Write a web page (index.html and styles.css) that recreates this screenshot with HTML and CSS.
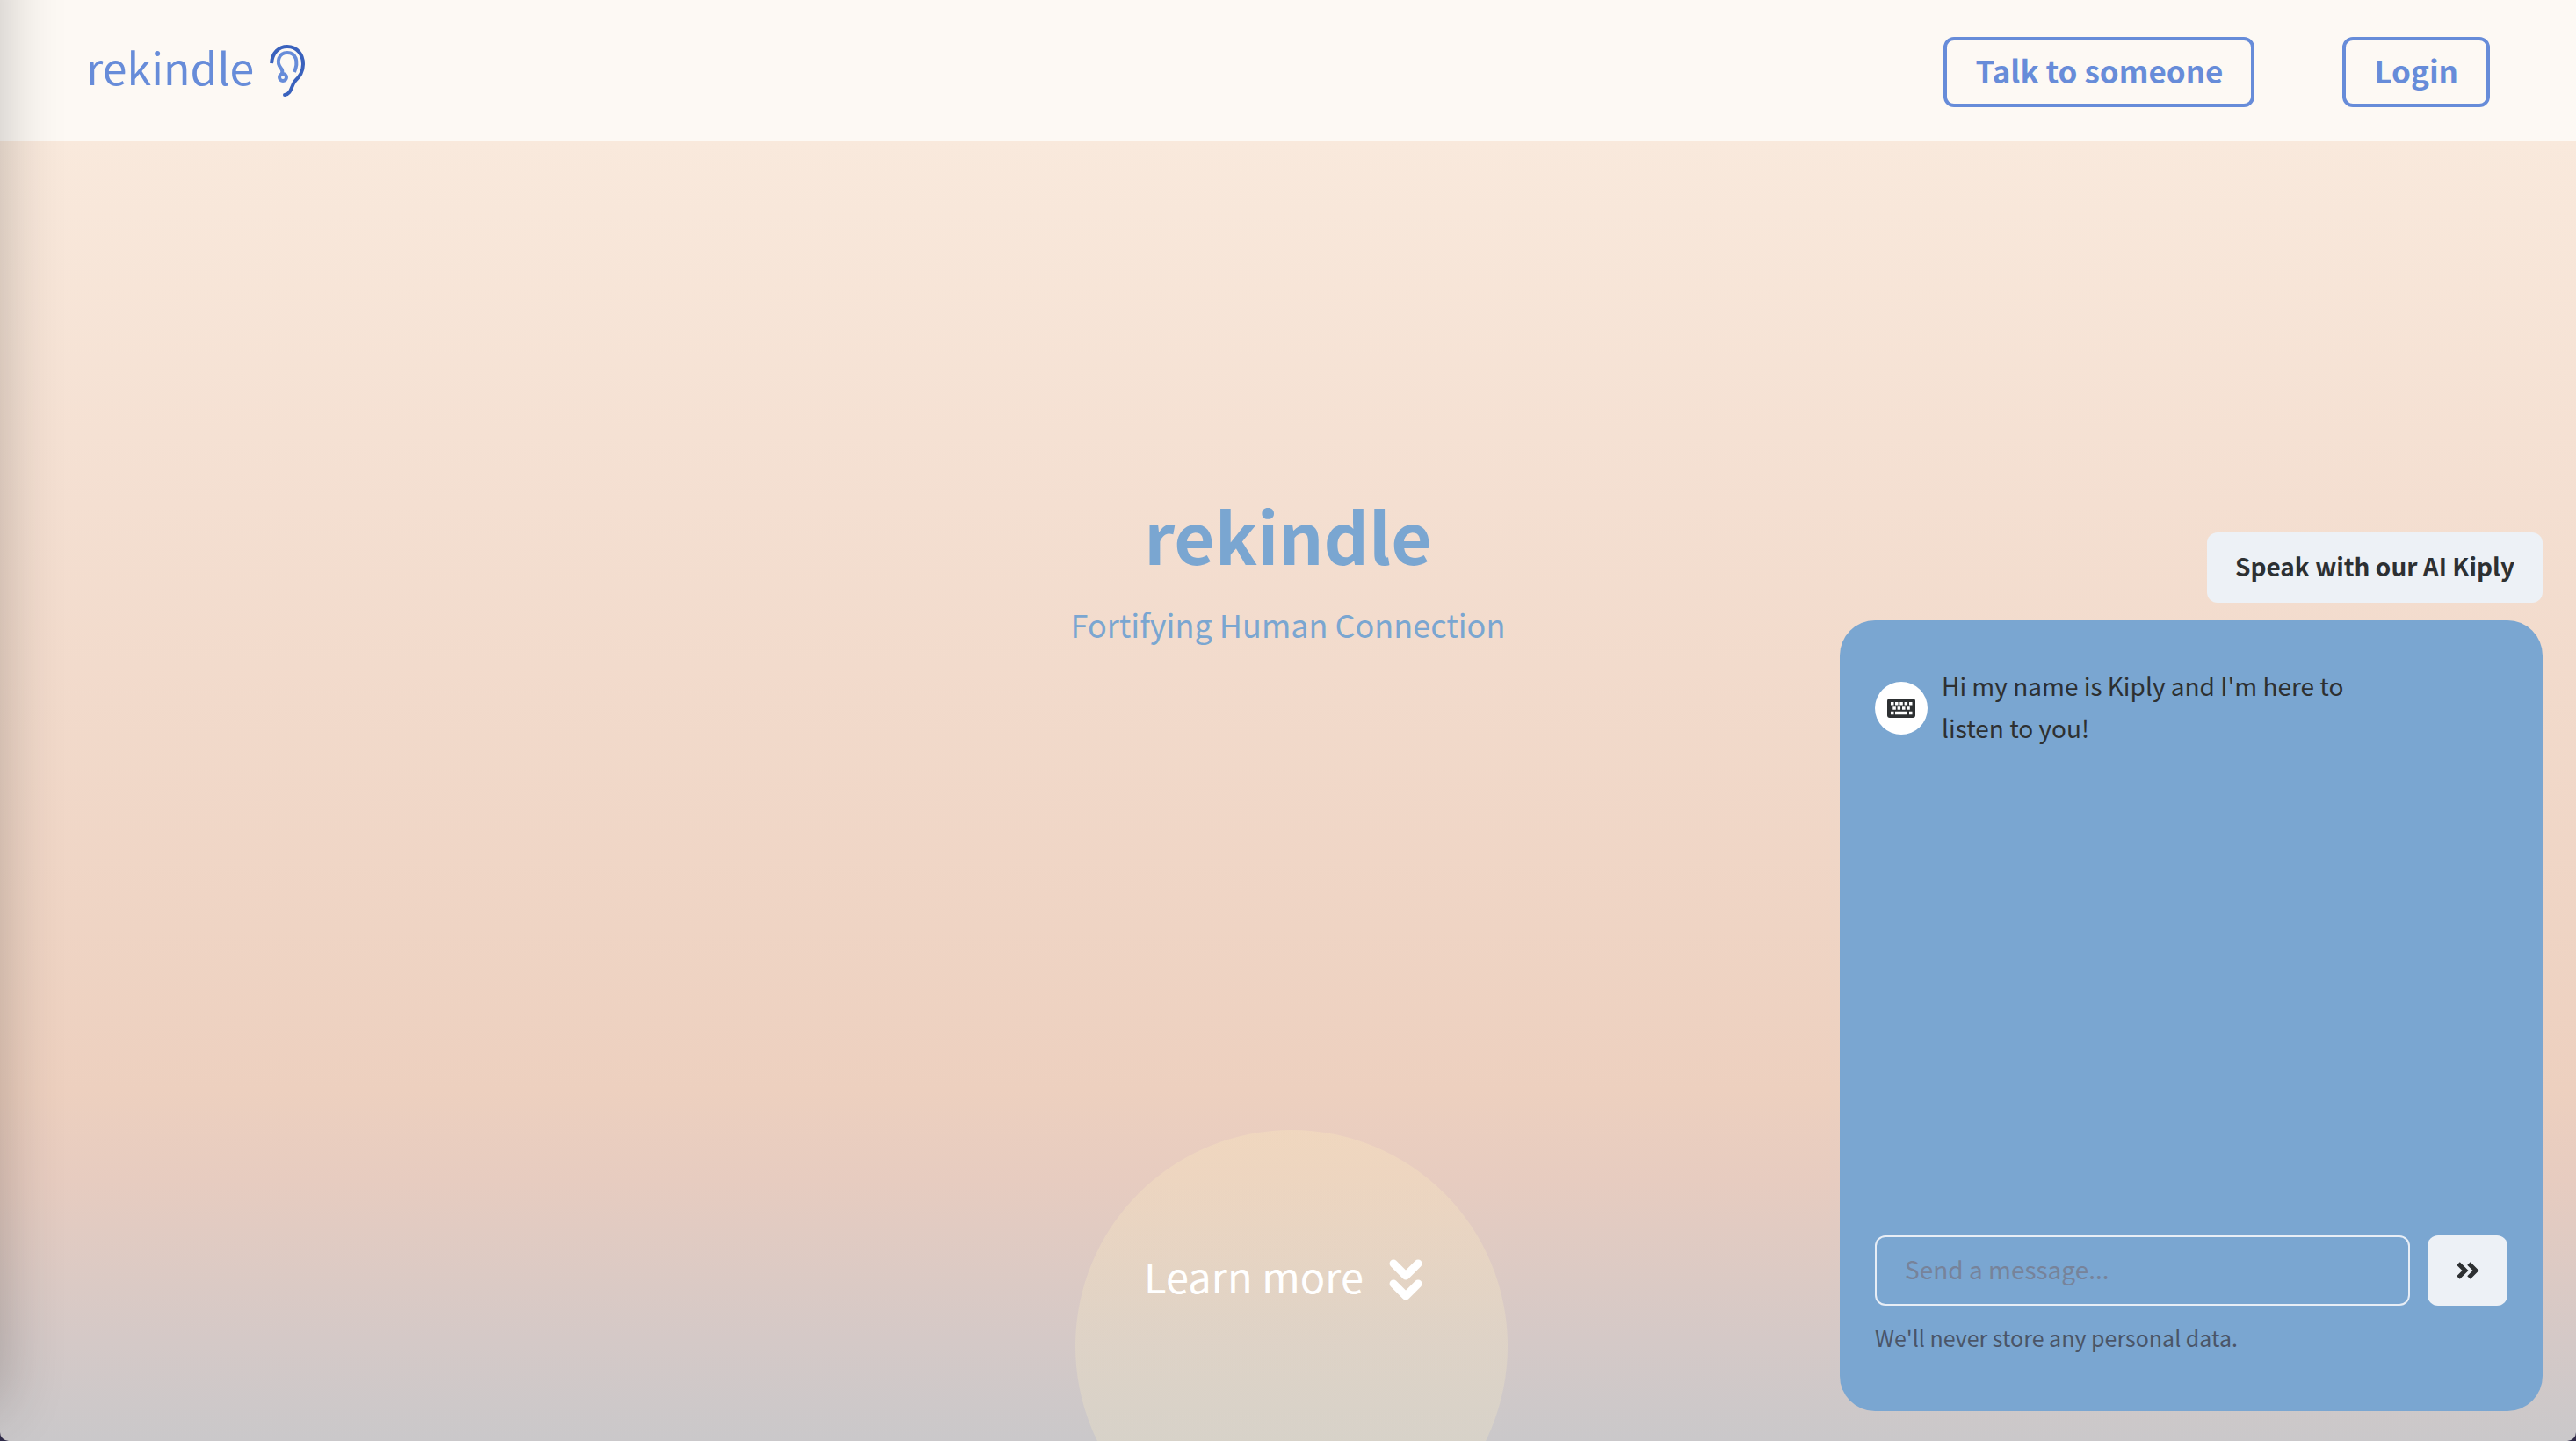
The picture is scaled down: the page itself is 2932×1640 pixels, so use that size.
FILE: index.html
```html
<!DOCTYPE html>
<html lang="en">
<head>
<meta charset="utf-8">
<title>rekindle</title>
<link rel="stylesheet" href="styles.css">
</head>
<body>
<header class="topbar">
  <a class="brand" href="#home">
    <span>rekindle</span>
    <svg class="brand-icon" viewBox="0 0 42 62" fill="none" aria-hidden="true">
      <path d="M2 21C3 9 10 2 20 2C31 2 38 11 38 22C38 31 34 36 29 41C24 47 25 56 17 57" stroke="#3a62bd" stroke-width="4"/>
      <circle cx="17" cy="57" r="2" fill="#3a62bd"/>
      <path d="M28 31C33 19 30 9 20 9C10 9 7 20 13 27Q15 29 14 33" stroke="#678cd9" stroke-width="4"/>
      <circle cx="15" cy="37" r="4" stroke="#678cd9" stroke-width="4"/>
    </svg>
  </a>
  <nav class="actions">
    <button class="btn-outline" type="button">Talk to someone</button>
    <button class="btn-outline" type="button">Login</button>
  </nav>
</header>
<main class="stage">
  <section class="hero">
    <h1 class="hero-title">rekindle</h1>
    <p class="hero-tagline">Fortifying Human Connection</p>
  </section>
  <div class="sun" aria-hidden="true"></div>
  <a class="learn" href="#more">
    <span>Learn more</span>
    <svg class="learn-icon" viewBox="0 0 44 56" aria-hidden="true" fill="none" stroke="#fff" stroke-width="9" stroke-linecap="round" stroke-linejoin="round"><path d="M8 10L22 24L36 10M8 33L22 47L36 33"/></svg>
  </a>
  <aside class="chat">
    <button class="btn-soft" type="button">Speak with our AI Kiply</button>
    <div class="panel">
      <div class="message">
        <span class="avatar">
          <svg class="avatar-icon" viewBox="0 0 32 22" aria-hidden="true">
            <rect width="32" height="22" rx="3" fill="#2d3032"/>
            <path fill="#fff" d="M4 4h3.500v3.500h-3.500zM9 4h3.500v3.500h-3.500zM14.300 4h3.500v3.500h-3.500zM19.600 4h3.500v3.500h-3.500zM25 4h3.500v3.500h-3.500zM6.300 9.200h3.500v3.500h-3.500zM11.600 9.200h3.500v3.500h-3.500zM17 9.200h3.500v3.500h-3.500zM22.300 9.200h3.500v3.500h-3.500zM4 14.700h3.500v3.500h-3.500zM9 14.700h14v3.500h-14zM25 14.700h3.500v3.500h-3.500z"/>
          </svg>
        </span>
        <p class="message-text">Hi my name is Kiply and I'm here to listen to you!</p>
      </div>
      <form class="composer">
        <div class="composer-row">
          <input class="field" type="text" placeholder="Send a message..." aria-label="Message">
          <button class="btn-soft btn-send" type="button" aria-label="Send"><svg class="send-icon" viewBox="0 0 26 20" aria-hidden="true" fill="none" stroke="#2d3032" stroke-width="5"><path d="M2 2L10 10L2 18M14 2L22 10L14 18"/></svg></button>
        </div>
        <p class="hint">We'll never store any personal data.</p>
      </form>
    </div>
  </aside>
</main>
</body>
</html>
```
FILE: styles.css
```css
* { box-sizing: border-box; }
html { background: #2f2a48; }
body {
  position: relative;
  margin: 0;
  min-height: 100vh;
  display: flex;
  flex-direction: column;
  overflow: hidden;
  border-radius: 0 0 10px 10px;
  font-family: "Noto Sans CJK JP", "Open Sans", sans-serif;
  color: #2d3032;
}
body::before {
  content: "";
  position: absolute;
  z-index: 1;
  left: -80px;
  top: -80px;
  bottom: 40px;
  width: 80px;
  box-shadow: 0 0 72px rgba(0, 0, 0, .24);
}
p, h1 { margin: 0; }
button, input { font: inherit; color: inherit; }
.topbar {
  display: flex;
  justify-content: space-between;
  align-items: center;
  padding: 42px 98px 38px;
  background: #fdf9f4;
}
.brand {
  display: flex;
  align-items: flex-start;
  gap: 18px;
  color: #678cd9;
  font-size: 50px;
  line-height: 48px;
  text-decoration: none;
}
.brand-icon { width: 42px; height: 62px; }
.actions { display: flex; gap: 100px; }
.btn-outline {
  height: 80px;
  padding: 0 32px 6px;
  border: 4px solid #678cd9;
  border-radius: 12px;
  background: none;
  color: #678cd9;
  font-size: 35px;
  font-weight: 600;
}
.stage {
  position: relative;
  flex: 1;
  display: grid;
  overflow: hidden;
  background: linear-gradient(#f9e9dc, #f4dfd1 28%, #edd0bf 73%, #e7ccc0 80%, #d5c9c7 92%, #cac8ca);
}
.hero { grid-area: 1 / 1; padding-top: 392px; text-align: center; color: #7aa6d1; }
.hero-title { font-size: 80px; line-height: 112px; font-weight: 700; }
.hero-tagline { font-size: 36px; line-height: 56px; margin-top: 18px; }
.sun {
  position: absolute;
  left: calc(50% + 4px);
  top: 1126px;
  width: 492px;
  height: 492px;
  transform: translateX(-50%);
  border-radius: 50%;
  background: linear-gradient(rgba(248, 228, 190, .4), rgba(240, 229, 198, .35) 50%);
}
.learn {
  position: absolute;
  left: 50%;
  bottom: 156px;
  transform: translateX(-50%);
  display: flex;
  align-items: flex-start;
  gap: 26px;
  padding-right: 8px;
  color: #fff;
  font-size: 47px;
  line-height: 48px;
  white-space: nowrap;
  text-decoration: none;
}
.learn-icon { width: 44px; height: 56px; }
.chat {
  grid-area: 1 / 1;
  justify-self: end;
  align-self: end;
  display: flex;
  flex-direction: column;
  align-items: flex-end;
  gap: 20px;
  width: 800px;
  margin: 0 38px 34px 0;
}
.btn-soft {
  height: 80px;
  padding: 0 32px 4px;
  border: 0;
  border-radius: 12px;
  background: #edf1f6;
  font-size: 28px;
  font-weight: 600;
}
.panel {
  display: flex;
  flex-direction: column;
  justify-content: space-between;
  width: 100%;
  height: 900px;
  padding: 50px 40px 64px;
  border-radius: 40px;
  background: #7aa6d1;
}
.message { display: flex; align-items: center; gap: 16px; }
.avatar { display: flex; align-items: center; justify-content: center; width: 60px; height: 60px; border-radius: 50%; background: #fff; }
.avatar-icon { width: 32px; height: 22px; }
.message-text { width: 500px; padding-bottom: 4px; font-size: 28px; line-height: 48px; }
.composer-row { display: flex; gap: 20px; }
.field { flex: 1; height: 80px; padding: 0 32px 4px; border: 2px solid #e8eef6; border-radius: 12px; background: none; font-size: 28px; }
.field::placeholder { color: #77839a; opacity: 1; }
.btn-send { display: flex; align-items: center; justify-content: center; width: 91px; padding: 0; }
.send-icon { width: 26px; height: 20px; }
.hint { margin-top: 16px; font-size: 25px; line-height: 40px; color: #4a5568; }
```
